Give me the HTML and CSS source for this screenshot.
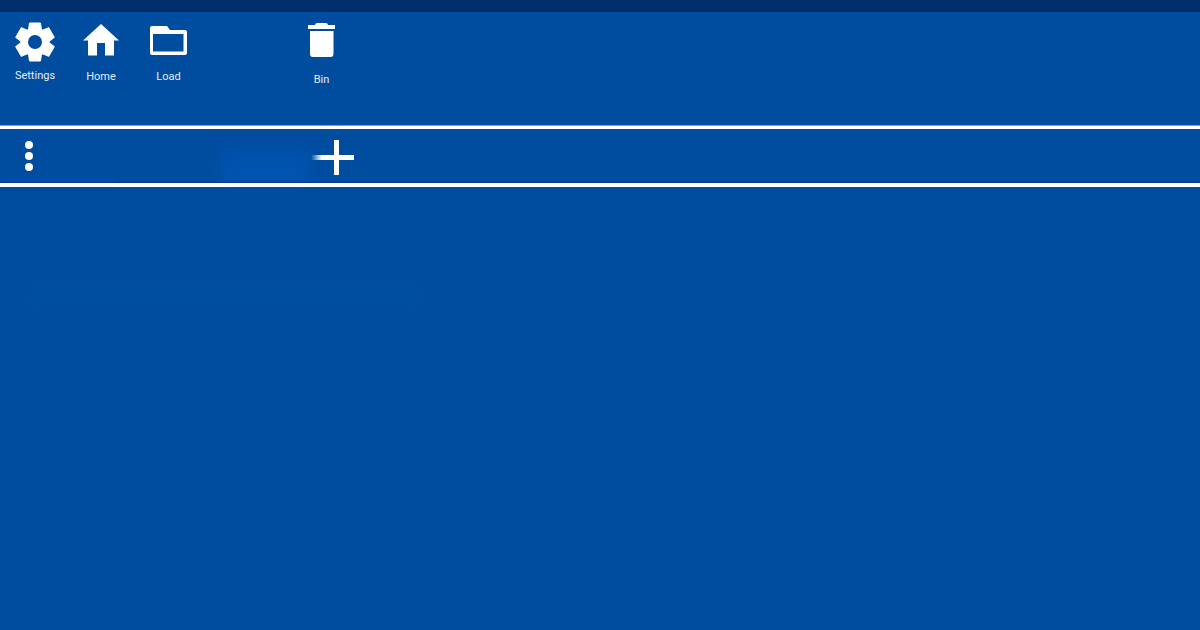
FILE: index.html
```html
<!DOCTYPE html>
<html lang="en">
<head>
<meta charset="utf-8">
<title>Board</title>
<link rel="stylesheet" href="styles.css">
</head>
<body>
<div class="statusbar"></div>
<header class="toolbar">
  <div class="tool tool-settings">
    <svg class="icon-gear" viewBox="-21 -20 42 40">
      <g class="gear-teeth">
        <polygon points="-5.500,-19 5.500,-19 6.500,-12 -6.500,-12"/>
        <polygon points="-5.500,-19 5.500,-19 6.500,-12 -6.500,-12" transform="rotate(60)"/>
        <polygon points="-5.500,-19 5.500,-19 6.500,-12 -6.500,-12" transform="rotate(120)"/>
        <polygon points="-5.500,-19 5.500,-19 6.500,-12 -6.500,-12" transform="rotate(180)"/>
        <polygon points="-5.500,-19 5.500,-19 6.500,-12 -6.500,-12" transform="rotate(240)"/>
        <polygon points="-5.500,-19 5.500,-19 6.500,-12 -6.500,-12" transform="rotate(300)"/>
      </g>
      <circle class="gear-ring" r="10.750"/>
    </svg>
    <span class="label">Settings</span>
  </div>
  <div class="tool tool-home">
    <svg class="icon-home" viewBox="0 0 36 32"><path fill="#fff" d="M18 0 36 16.500H31V31.500H22V19H14V31.500H5V16.500H0Z"/></svg>
    <span class="label">Home</span>
  </div>
  <div class="tool tool-load">
    <svg class="icon-folder" viewBox="0 0 37 29"><path fill="#fff" fill-rule="evenodd" d="M2 0H17L20 4H35Q37 4 37 6V27Q37 29 35 29H2Q0 29 0 27V2Q0 0 2 0ZM3 8V25.500H33.500V8Z"/></svg>
    <span class="label">Load</span>
  </div>
  <div class="tool tool-bin">
    <svg class="icon-bin" viewBox="0 0 27 34"><path fill="#fff" d="M7 2Q7 0 9.500 0H17.500Q20 0 20 2H27V6H0V2ZM2 8H25.500V31Q25.500 34 22.500 34H5Q2 34 2 31Z"/></svg>
    <span class="label">Bin</span>
  </div>
</header>
<div class="rule rule-top"></div>
<section class="row">
  <div class="dots"><i class="dot"></i><i class="dot"></i><i class="dot"></i></div>
  <div class="glow"></div>
  <div class="streak"></div>
  <div class="plus"><span class="plus-h"></span><span class="plus-v"></span></div>
</section>
<div class="rule rule-bottom"></div>
<div class="smudge"></div>
</body>
</html>
```
FILE: styles.css
```css
html, body {
  margin: 0;
  padding: 0;
  height: 100%;
}

body {
  position: relative;
  background: #004c9e;
  font-family: Roboto, "Liberation Sans", sans-serif;
  overflow: hidden;
}

.statusbar {
  height: 12px;
  background: #002f6c;
}

.toolbar {
  height: 114px;
  display: flex;
  align-items: flex-start;
  padding-left: 14px;
  box-sizing: border-box;
}

.tool {
  display: flex;
  flex-direction: column;
  align-items: center;
}

.label {
  font-size: 11px;
  line-height: 13px;
  color: #e6edf6;
}

.tool-settings { width: 42px; padding-top: 10px; }
.tool-home { width: 36px; margin-left: 27px; padding-top: 12px; }
.tool-load { width: 37px; margin-left: 31px; padding-top: 14px; }
.tool-bin { width: 27px; margin-left: 121px; padding-top: 11px; }

.icon-gear { width: 42px; height: 40px; margin-bottom: 7px; }
.icon-home { width: 36px; height: 32px; margin-bottom: 14px; }
.icon-folder { width: 37px; height: 29px; margin-bottom: 15px; }
.icon-bin { width: 27px; height: 34px; margin-bottom: 16px; }

.gear-teeth {
  fill: #fff;
  stroke: #fff;
  stroke-width: 1;
  stroke-linejoin: round;
}

.gear-ring {
  fill: none;
  stroke: #fff;
  stroke-width: 7.500;
}

.rule {
  position: relative;
  z-index: 1;
  background: #fff;
}

.rule-top {
  height: 3px;
  box-shadow: 0 -1px 0 #7f9fd0;
}

.rule-bottom {
  height: 4px;
  box-shadow: 0 -1px 0 #003a9c;
}

.row {
  position: relative;
  height: 54px;
  display: flex;
  align-items: flex-start;
}

.dots {
  display: flex;
  flex-direction: column;
  gap: 3px;
  margin: 12px 0 0 25px;
}

.dot {
  display: block;
  width: 8px;
  height: 8px;
  border-radius: 50%;
  background: #fff;
}

.glow {
  position: absolute;
  left: 220px;
  top: 14px;
  width: 90px;
  height: 40px;
  background: linear-gradient(to bottom, #0050a8, #0058bc);
  opacity: .8;
  filter: blur(7px);
}

.streak {
  position: absolute;
  left: 0;
  bottom: 0;
  width: 115px;
  height: 4px;
  background: #0054b4;
  filter: blur(3px);
}

.plus {
  position: absolute;
  left: 311px;
  top: 11px;
  width: 43px;
  height: 35px;
}

.plus-h {
  position: absolute;
  left: 0;
  right: 0;
  top: 15px;
  height: 5px;
  background: linear-gradient(to right, rgba(255,255,255,0), #fff 25%);
}

.plus-v {
  position: absolute;
  left: 23px;
  top: 0;
  width: 5px;
  height: 35px;
  background: #fff;
}

.smudge {
  position: absolute;
  left: 20px;
  top: 272px;
  width: 410px;
  height: 46px;
  background: #004e9f;
  filter: blur(8px);
}
```
